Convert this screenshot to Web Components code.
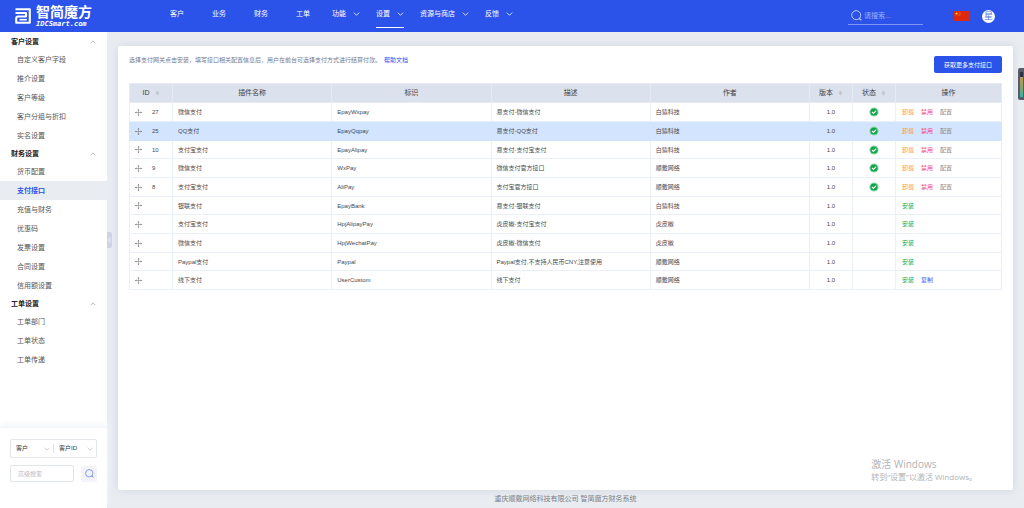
<!DOCTYPE html>
<html lang="zh-CN">
<head>
<meta charset="utf-8">
<title>支付接口 - 智简魔方</title>
<style>
html,body{height:100%}
body{margin:0;font-family:"Liberation Sans","Noto Sans CJK SC",sans-serif;font-size:6px;line-height:12px;color:#4a4d55;background:#e9edf2;
--brand:#2c53e9;--line:#ebeff6;--m:7px;--s:6px}
</style>
</head>
<body>
<app-shell>
  <top-bar slot="top"></top-bar>
  <side-menu slot="side"></side-menu>
  <gateway-card></gateway-card>
</app-shell>
<script>
const define=(name,html,init)=>customElements.define(name,class extends HTMLElement{
  constructor(){
    super();
    const t=document.createElement('template');
    t.innerHTML='<style>:host,*{box-sizing:border-box}a{text-decoration:none;color:inherit}button,input,select{font:inherit;margin:0}ul{list-style:none;margin:0;padding:0}</style>'+html;
    this.attachShadow({mode:'open'}).append(t.content.cloneNode(true));
    if(init)init(this,this.shadowRoot);
  }
});

define('arrow-mark',`<style>:host{display:block;width:7px;height:4px}:host([up]){transform:rotate(180deg)}svg{display:block;width:100%;height:100%}</style>
<svg viewBox="0 0 7 4"><path d="M.8.6 3.5 3.3 6.2.6" fill="none" stroke="currentColor" stroke-width=".8"/></svg>`);

define('search-mark',`<style>:host{display:block;width:11px;height:11px}svg{display:block;width:100%;height:100%}</style>
<svg viewBox="0 0 11 11"><circle cx="5.200" cy="5.200" r="4.500" fill="none" stroke="currentColor"/><path d="m8 8.300 2.400 1.900" stroke="currentColor" stroke-width="1.200"/></svg>`);

define('site-logo',`<style>
:host{display:block}
a{display:flex;align-items:center;gap:5px;color:#fff}
svg{width:16px;height:16px;display:block}
b{display:block;font-size:14px;line-height:15px}
i{display:block;font:italic bold 7px/8px "DejaVu Sans Mono",monospace}
</style>
<a href="#"><svg viewBox="0 0 16 16"><path d="M.500 1.200H14.800V14.800H1.200V10.600Q1.200 8.500 3.200 8.500H11V5H.500" fill="none" stroke="#fff" stroke-width="2.100" stroke-linejoin="round"/><path d="M4.500 11.700H11.800" stroke="#fff" stroke-width="1.600"/></svg>
<span><b>智简魔方</b><i>IDCSmart.com</i></span></a>`);

define('nav-item',`<style>
:host{display:flex;height:100%;margin:0 14px}
:host([sub]){margin:0 8px}
a{display:flex;align-items:center;gap:7px;height:28px;font-size:var(--m);color:#fff;border-bottom:1px solid transparent}
:host([on]) a{border-color:#fff}
arrow-mark{display:none}
:host([sub]) arrow-mark{display:block}
</style><a href="#"><slot></slot><arrow-mark></arrow-mark></a>`);

define('top-bar',`<style>
:host{display:flex;align-items:center;height:32px;padding:0 29px 0 15px;background:var(--brand);color:#fff}
site-logo{width:141px}
nav{display:flex;height:100%;flex:1}
label{display:flex;align-items:center;gap:2px;width:75px;height:18px;padding-left:3px;border-bottom:1px solid #7d96f3;color:#b9c7fa}
input{flex:1;min-width:0;border:0;padding:0;background:none;color:#fff;font-size:var(--m);outline:0}
input::placeholder{color:#9db0f7}
.flag{display:block;width:15px;height:10px;margin:0 13px 0 31px}
button{width:13px;height:13px;border:0;border-radius:50%;padding:0;background:#fff;color:#4d7be0;font-size:9px;line-height:13px}
</style>
<site-logo></site-logo>
<nav><nav-item>客户</nav-item><nav-item>业务</nav-item><nav-item>财务</nav-item><nav-item>工单</nav-item><nav-item sub>功能</nav-item><nav-item sub on>设置</nav-item><nav-item sub>资源与商店</nav-item><nav-item sub>反馈</nav-item></nav>
<label><search-mark></search-mark><input placeholder="请搜索..." aria-label="请搜索"></label>
<svg class="flag" viewBox="0 0 15 10"><path fill="#de2910" d="M0 0h15v10H0z"/><path fill="#ffde00" d="m2.500 1 .4 1.100h1.200l-1 .7.400 1.200-1-.7-1 .7.400-1.200-1-.7h1.200z"/><g fill="#ffde00"><circle cx="5" cy="1" r=".4"/><circle cx="6" cy="2" r=".4"/><circle cx="6" cy="3.500" r=".4"/><circle cx="5" cy="4.500" r=".4"/></g></svg>
<button>星</button>`);

define('menu-group',`<style>
:host{display:block}
button{display:flex;align-items:center;justify-content:space-between;width:100%;height:17px;padding:0 11px;border:0;background:none;color:#222;font-size:var(--m);font-weight:bold;text-align:left}
arrow-mark{color:#9a9da5;width:6px}
a{display:flex;align-items:center;height:19px;padding-left:17px;font-size:var(--m);color:#555}
a.on{background:#e9edf2;color:var(--brand);font-weight:bold}
</style><button><span></span><arrow-mark up></arrow-mark></button><ul></ul>`,(el,r)=>{
  r.querySelector('span').textContent=el.getAttribute('label');
  r.querySelector('ul').innerHTML=el.getAttribute('items').split(' ').map(t=>`<li><a href="#"${t===el.getAttribute('active')?' class="on"':''}>${t}</a></li>`).join('');
});

define('quick-search',`<style>
:host{display:block;padding:11px 10px 26px;border-top:1px solid #f3f5fa;box-shadow:0 -3px 6px #f3f6fb}
.pick{display:flex;align-items:center;height:19px;border:1px solid #e4e7ee;border-radius:2px;margin-bottom:7px}
.field{position:relative;flex:1;display:flex;align-items:center;padding-left:5px}
.field+.field{border-left:1px solid #dfe2ea}
select{appearance:none;border:0;padding:0;width:100%;background:none;color:#333;font-size:var(--s);height:9px;line-height:9px}
arrow-mark{position:absolute;right:3px;color:#b6bac4;width:6px;pointer-events:none}
.row{display:flex;justify-content:space-between;align-items:center}
input{width:64px;height:17px;border:1px solid #e0e4ec;border-radius:2px;padding:0 7px;font-size:var(--s)}
input::placeholder{color:#b5b9c4}
.row button{display:grid;place-items:center;width:16px;height:16px;padding:0;border:0;border-radius:2px;background:#f2f4fa;color:#7188f0}
search-mark{width:9px;height:9px}
</style>
<div class="pick"><span class="field"><select aria-label="类型"><option>客户</option></select><arrow-mark></arrow-mark></span><span class="field"><select aria-label="字段"><option>客户ID</option></select><arrow-mark></arrow-mark></span></div>
<div class="row"><input placeholder="高级搜索" aria-label="高级搜索"><button aria-label="搜索"><search-mark></search-mark></button></div>`);

define('side-menu',`<style>
:host{display:flex;flex-direction:column;position:relative;background:#fff}
nav{flex:1;padding-top:1px}
.fold{position:absolute;left:100%;top:200px;display:grid;place-items:center;width:5px;height:16px;padding:0;border:0;border-radius:0 2px 2px 0;background:#ccd5e8;color:#fff}
svg{display:block;width:3px;height:6px}
</style>
<nav>
<menu-group label="客户设置" items="自定义客户字段 推介设置 客户等级 客户分组与折扣 实名设置"></menu-group>
<menu-group label="财务设置" active="支付接口" items="货币配置 支付接口 充值与财务 优惠码 发票设置 合同设置 信用额设置"></menu-group>
<menu-group label="工单设置" items="工单部门 工单状态 工单传递"></menu-group>
</nav><quick-search></quick-search>
<button class="fold" aria-label="收起"><svg viewBox="0 0 3 6"><path d="M2.500.5.5 3l2 2.500" fill="none" stroke="currentColor" stroke-width=".7"/></svg></button>`);

const moveIcon='<svg class="move" viewBox="0 0 8 8"><path d="M4 1v6M1 4h6" stroke="#777" stroke-width=".6"/><path d="M4 0 5.100 1.500H2.900zM4 8 2.900 6.500h2.200zM0 4l1.500-1.100v2.200zM8 4 6.500 5.100V2.900z" fill="#666"/></svg>';
const okIcon='<svg class="ok" viewBox="0 0 10 10" role="img" aria-label="启用"><circle cx="5" cy="5" r="4.600" fill="#8ed9a8"/><circle cx="5" cy="5" r="3.600" fill="#0fa548"/><path d="m3 5 1.500 1.500L7.200 3.700" fill="none" stroke="#fff" stroke-width="1.100"/></svg>';
const sortIcon='<svg class="sort" viewBox="0 0 6 6"><path d="M3 0 5.500 2.600H.5zM3 6 .5 3.400h5z" fill="#bfc4cf"/></svg>';
const rows=[
 ['27','微信支付','EpayWxpay','易支付-微信支付','白猿科技',1],
 ['25','QQ支付','EpayQqpay','易支付-QQ支付','白猿科技',1],
 ['10','支付宝支付','EpayAlipay','易支付-支付宝支付','白猿科技',1],
 ['9','微信支付','WxPay','微信支付官方接口','顺戴网络',1],
 ['8','支付宝支付','AliPay','支付宝官方接口','顺戴网络',1],
 ['','银联支付','EpayBank','易支付-银联支付','白猿科技',0],
 ['','支付宝支付','HpjAlipayPay','虎皮椒-支付宝支付','虎皮椒',0],
 ['','微信支付','HpjWechatPay','虎皮椒-微信支付','虎皮椒',0],
 ['','Paypal支付','Paypal','Paypal支付,不支持人民币CNY,注意使用','顺戴网络',0],
 ['','线下支付','UserCustom','线下支付','顺戴网络',2]
];
const acts=[['安装 add'],['卸载 off','禁用 stop','配置 conf'],['安装 add','复制 copy']];

define('gateway-table',`<style>
:host{display:block}
table{width:100%;border-collapse:collapse;table-layout:fixed}
.n{width:43px}.w{width:106px}
th{height:19px;padding:0;background:#dbe1ed;border:1px solid #e6eaf3;color:#3c3f48;font-size:var(--m);font-weight:normal}
td{padding:0 5px;border:1px solid var(--line);font-size:var(--s);white-space:nowrap;color:#45484f}
td:last-child{padding:0 6px}
tbody tr{height:19px}
tbody tr:nth-child(3n){height:18px}
tr.hot td{background:#d3e4fe;border-color:#d3e4fe}
td.c{text-align:center}
svg{display:block}
.id{display:flex;align-items:center;gap:10px}
.move{width:7px;height:7px}
.ok{width:10px;height:10px;margin:auto}
.cap{display:flex;align-items:center;justify-content:center;gap:5px}
.sort{width:5px;height:6px}
.acts{display:flex;gap:7px}
.off{color:#ff9a1e}.stop{color:#f0437a}.conf{color:#888}.add{color:#10a84b}.copy{color:#3c5ff0}
</style>
<table><colgroup><col class="n"><col><col><col><col><col class="n"><col class="n"><col class="w"></colgroup>
<thead><tr><th><span class="cap">ID${sortIcon}</span></th><th>插件名称</th><th>标识</th><th>描述</th><th>作者</th><th><span class="cap">版本${sortIcon}</span></th><th><span class="cap">状态${sortIcon}</span></th><th>操作</th></tr></thead><tbody></tbody></table>`,(el,r)=>{
  r.querySelector('tbody').innerHTML=rows.map((x,i)=>`<tr${i===1?' class="hot"':''}><td><span class="id">${moveIcon}<span>${x[0]}</span></span></td>${x.slice(1,5).map(t=>`<td>${t}</td>`).join('')}<td class="c">1.0</td><td>${x[5]===1?okIcon:''}</td><td><ul class="acts">${acts[x[5]].map(a=>{const[t,c]=a.split(' ');return`<li class="${c}"><a href="#">${t}</a></li>`}).join('')}</ul></td></tr>`).join('');
});

define('system-notice',`<style>
:host{display:block;font-family:"Open Sans","Noto Sans CJK SC",sans-serif;color:#b3b3b3;white-space:nowrap}
p{margin:0;font-size:10px;line-height:13px}
p+p{font-size:8px;line-height:12px}
</style><p>激活 Windows</p><p>转到“设置”以激活 Windows。</p>`);

define('gateway-card',`<style>
:host{display:block;position:relative;padding:10px 11px;background:#fff;border-radius:2px;box-shadow:0 0 8px #cfd5de}
header{display:flex;justify-content:space-between;margin-bottom:10px}
p{margin:0;line-height:8px;color:#75798a}
p a{color:var(--brand);margin-left:3px}
button{width:68px;height:17px;padding:0;border:0;border-radius:2px;background:var(--brand);color:#fff;font-size:var(--s)}
system-notice{position:absolute;right:36px;bottom:7px}
</style>
<header><p>选择支付网关点击安装，填写接口相关配置信息后，用户在前台可选择支付方式进行结算付款。<a href="#">帮助文档</a></p><button>获取更多支付接口</button></header>
<gateway-table></gateway-table><system-notice></system-notice>`);

define('app-shell',`<style>
:host{display:grid;grid-template:32px 1fr/107px 1fr;min-height:100%;position:relative}
::slotted(top-bar){grid-column:1/-1}
main{display:flex;flex-direction:column;padding:14px 11px 3px}
.card{flex:1;display:grid}
footer{padding-top:2px;text-align:center;font-size:var(--m);line-height:13px;color:#777b82}
.meter{position:absolute;right:0;top:68px;width:6px;height:32px;padding:4px 1px 3px 2px;border-radius:2px 0 0 2px;background:#565c69;display:flex}
.meter i{flex:1;border-top:5px solid #2c3242;background:linear-gradient(#b79b5c,#8e9f6a 50%,#39b3a2)}
</style>
<slot name="top"></slot><slot name="side"></slot>
<main><div class="card"><slot></slot></div><footer>重庆顺戴网络科技有限公司 智简魔方财务系统</footer></main>
<div class="meter"><i></i></div>`);
</script>
</body>
</html>
